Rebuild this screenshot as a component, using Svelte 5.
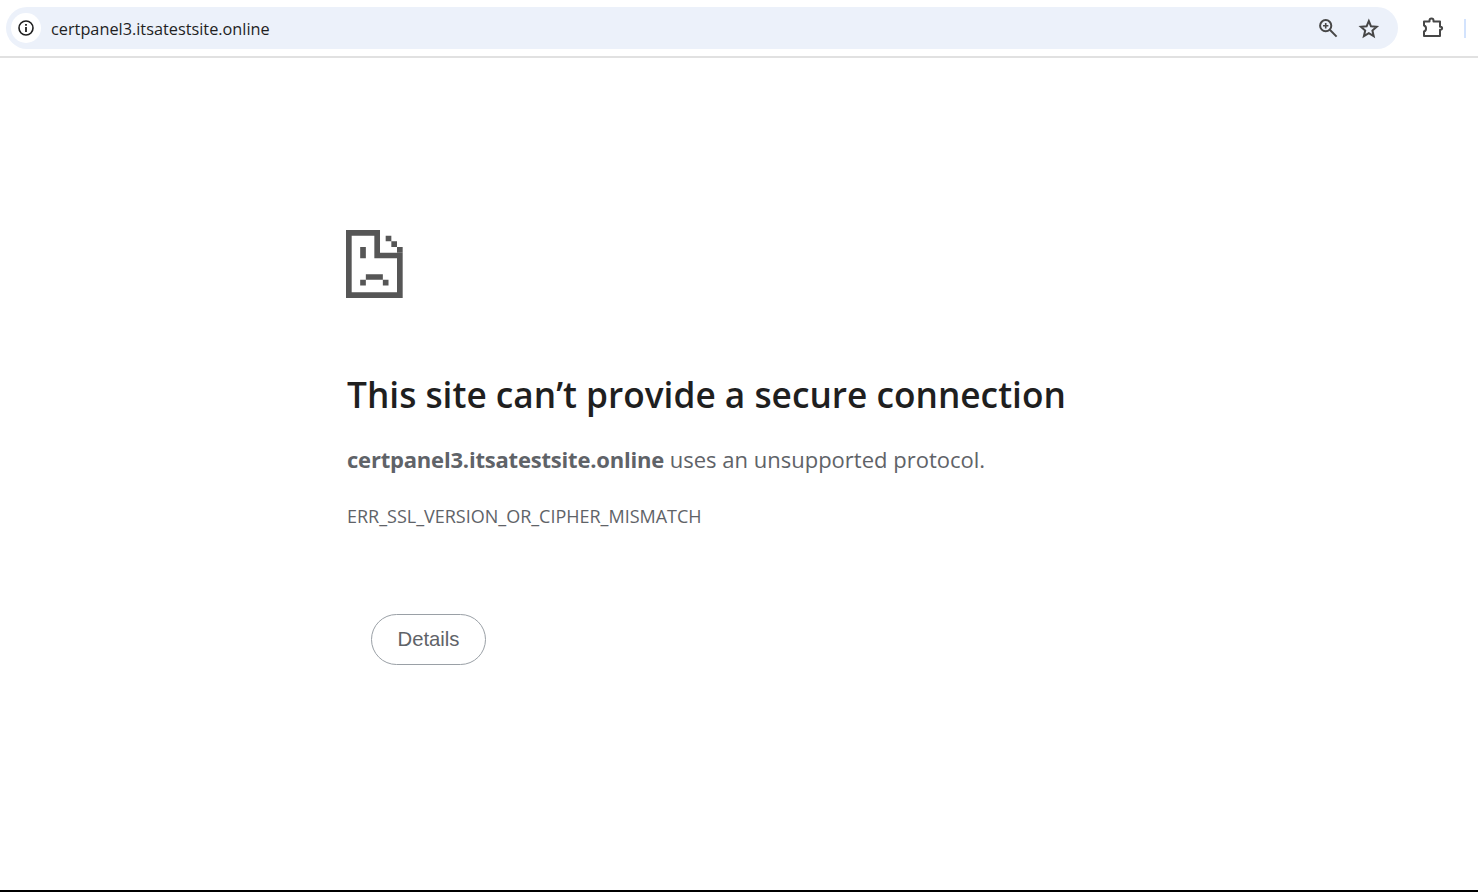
<script lang="ts">
	const host = 'certpanel3.itsatestsite.online';
	const code = 'ERR_SSL_VERSION_OR_CIPHER_MISMATCH';
</script>

<div class="page">
	<header class="toolbar">
		<div class="omnibox">
			<span class="site-info">
				<svg width="18" height="18" viewBox="0 0 18 18" fill="none" stroke="#1f1f1f">
					<circle cx="9" cy="9" r="7" stroke-width="1.6" />
					<path d="M9 8v5" stroke-width="1.8" />
					<path d="M9 5v1.8" stroke-width="1.8" />
				</svg>
			</span>
			<span class="url">{host}</span>
			<span class="omni-actions">
				<svg width="22" height="22" viewBox="0 0 22 22" fill="none" stroke="#474747">
					<circle cx="7.7" cy="8.7" r="5.6" stroke-width="2" />
					<path d="M11.8 12.8 18.6 19.6" stroke-width="2" />
					<path d="M5 8.7h5.4M7.7 6v5.4" stroke-width="1.6" />
				</svg>
				<svg width="22" height="22" viewBox="0 0 22 22" fill="none" stroke="#474747" stroke-width="2" stroke-linejoin="miter">
					<path d="M10.8 4l2.2 5.3 5.7.5-4.3 3.8 1.3 5.6-4.9-3-4.9 3 1.3-5.6-4.3-3.8 5.7-.5z" />
				</svg>
			</span>
		</div>
		<button class="ext-btn" aria-label="Extensions">
			<svg width="22" height="22" viewBox="0 0 22 22" fill="none" stroke="#474747" stroke-width="2" stroke-linejoin="round">
				<path d="M2 4.5H7.5V3.5a2 2 0 0 1 4 0V4.5H18v5.2h.6a1.5 1.5 0 0 1 0 3H18V19H2v-4.5a3 3 0 0 0 2-3 3 3 0 0 0-2-3z" />
			</svg>
		</button>
		<span class="sliver"></span>
	</header>

	<main class="interstitial">
		<svg class="sad-page" width="56.7" height="68" viewBox="0 0 10 12" fill="#565656" aria-hidden="true">
			<path d="M0 0h6v4h4v8H0zM1 1v10h8V5H5V1z" fill-rule="evenodd" />
			<path d="M7 1h1v1H7zM8 2h1v1H8zM9 3h1v1H9z" />
			<path d="M2.5 3h1v2h-1zM3.5 7.8h3v1h-3zM2.5 8.8h1v1h-1zM6.5 8.8h1v1h-1z" />
		</svg>
		<h1>This site can’t provide a secure connection</h1>
		<p class="summary"><strong>{host}</strong> uses an unsupported protocol.</p>
		<p class="error-code">{code}</p>
		<button class="details">Details</button>
	</main>

	<div class="bottom-edge"></div>
</div>

<style>
	:global(body) {
		margin: 0;
		background: white;
		font-family: 'Open Sans', 'Noto Sans', sans-serif;
	}

	.page {
		height: 892px;
		display: flex;
		flex-direction: column;
		overflow: hidden;
	}

	.toolbar {
		flex: none;
		height: 56px;
		box-sizing: content-box;
		border-bottom: 2px solid #e1e1e1;
		display: flex;
		align-items: center;
		padding: 0 12px 0 6px;
	}

	.omnibox {
		flex: none;
		width: 1392px;
		height: 42px;
		border-radius: 21px;
		background: #ecf1fa;
		display: flex;
		align-items: center;
		padding: 0 18px 0 5px;
		box-sizing: border-box;
	}

	.site-info {
		width: 30px;
		height: 30px;
		border-radius: 50%;
		background: white;
		display: flex;
		align-items: center;
		justify-content: center;
		flex: none;
	}

	.url {
		margin-left: 10px;
		padding-top: 2px;
		font-size: 16.3px;
		color: #1f1f1f;
		flex: 1;
	}

	.omni-actions {
		display: flex;
		gap: 18px;
		align-items: center;
	}

	.omni-actions svg,
	.ext-btn svg {
		display: block;
	}

	.ext-btn {
		margin-left: 24px;
		padding: 0;
		border: none;
		background: none;
	}

	.sliver {
		margin-left: 20px;
		width: 2px;
		height: 19px;
		background: #d3e3fd;
	}

	.interstitial {
		flex: 1;
		padding: 172px 0 0 346px;
	}

	.sad-page {
		display: block;
	}

	h1 {
		margin: 72px 0 0;
		padding-left: 1px;
		font-size: 35.25px;
		line-height: 48px;
		font-weight: 600;
		color: #1f1f1f;
	}

	.summary {
		margin: 25px 0 0;
		padding-left: 1px;
		font-size: 22px;
		line-height: 32px;
		color: #5f6368;
	}

	.summary strong {
		font-weight: 700;
		letter-spacing: -0.2px;
	}

	.error-code {
		margin: 29px 0 0;
		padding-left: 1px;
		font-size: 18px;
		letter-spacing: -0.01px;
		line-height: 24px;
		color: #5f6368;
	}

	.details {
		display: block;
		margin: 86px 0 0 25px;
		width: 115px;
		height: 51px;
		border: 1px solid #9aa0a6;
		border-radius: 26px;
		background: white;
		font-family: 'Liberation Sans', Arial, sans-serif;
		font-size: 20.3px;
		color: #5f6368;
	}

	.bottom-edge {
		flex: none;
		height: 2px;
		background: #000;
	}
</style>
